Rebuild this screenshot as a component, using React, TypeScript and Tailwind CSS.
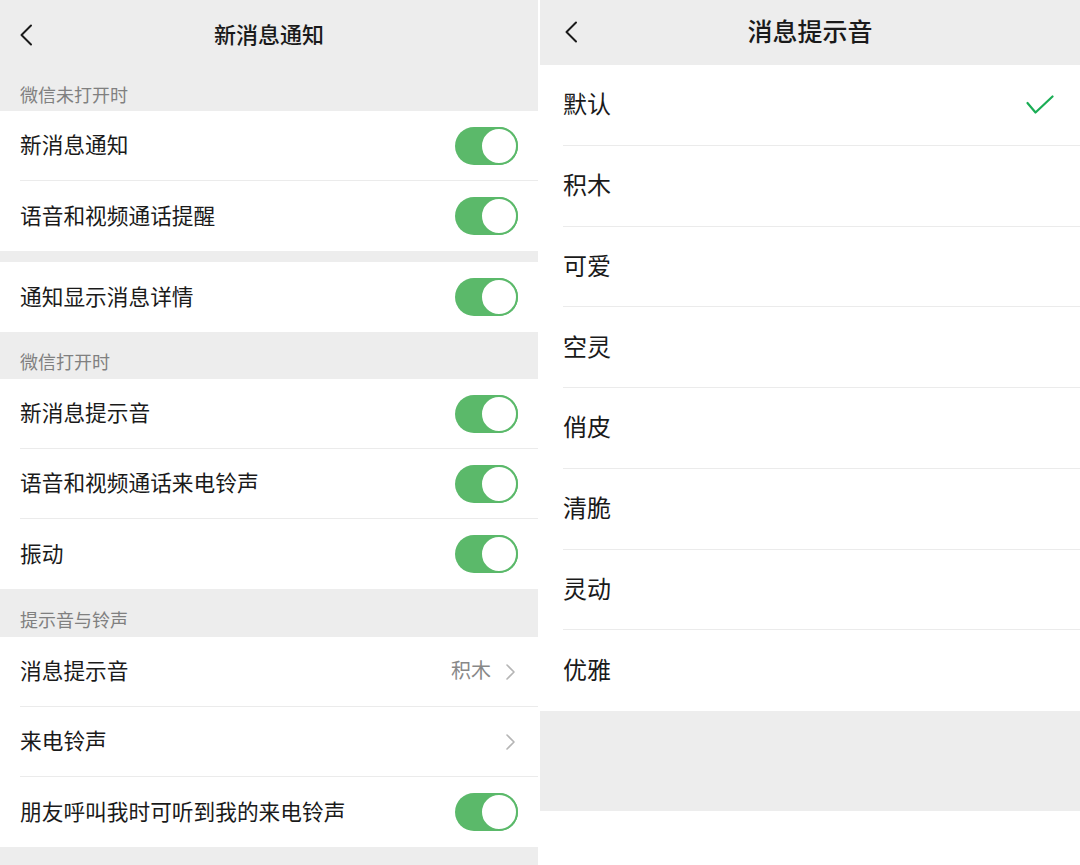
import React from "react";

const Toggle = () => (
  <div className="relative h-[38px] w-[63px] rounded-full bg-[#5bb96a]">
    <div className="absolute right-0 top-0 h-[38px] w-[38px] rounded-full border-2 border-[#5bb96a] bg-white" />
  </div>
);

const BackArrow = () => (
  <svg width="14" height="22" viewBox="0 0 14 22" fill="none">
    <path d="M12 1.5 L2.5 11 L12 20.5" stroke="#1a1a1a" strokeWidth="2" strokeLinecap="round" strokeLinejoin="round" />
  </svg>
);

const Chevron = () => (
  <svg width="9" height="16" viewBox="0 0 9 16" fill="none">
    <path d="M1 1 L8 8 L1 15" stroke="#b5b5b5" strokeWidth="1.6" strokeLinecap="round" strokeLinejoin="round" />
  </svg>
);

const Check = () => (
  <svg width="28" height="20" viewBox="0 0 28 20" fill="none">
    <path d="M1.5 8 L9.5 17.5 L26.5 1.5" stroke="#1aad55" strokeWidth="2.2" strokeLinecap="round" strokeLinejoin="round" />
  </svg>
);

type Row = { label: string; kind: "toggle" | "link"; value?: string };

const SettingRow = ({ row, last }: { row: Row; last: boolean }) => (
  <div className="flex h-[70px] items-stretch bg-white pl-5">
    <div
      className={`flex flex-1 items-center justify-between pr-5 ${
        last ? "" : "border-b border-[#ebebeb]"
      }`}
    >
      <span className="mb-[3px] text-[21.7px] leading-none text-[#1a1a1a]">{row.label}</span>
      {row.kind === "toggle" ? (
        <Toggle />
      ) : (
        <div className="flex items-center gap-[15px] pr-[3px]">
          {row.value && (
            <span className="mb-[3px] text-[20px] leading-none text-[#888888]">{row.value}</span>
          )}
          <Chevron />
        </div>
      )}
    </div>
  </div>
);

const Group = ({ rows }: { rows: Row[] }) => (
  <div className="flex flex-col">
    {rows.map((r, i) => (
      <SettingRow key={r.label} row={r} last={i === rows.length - 1} />
    ))}
  </div>
);

const SectionLabel = ({ text, h, pb }: { text: string; h: string; pb: string }) => (
  <div className={`flex items-end px-5 ${h} ${pb}`}>
    <span className="text-[18px] leading-[18px] text-[#808080]">{text}</span>
  </div>
);

const sounds = ["默认", "积木", "可爱", "空灵", "俏皮", "清脆", "灵动", "优雅"];

export default function App() {
  return (
    <div className="flex h-[865px] w-[1080px] overflow-hidden bg-white font-['Noto_Sans_CJK_SC',sans-serif]">
      {/* Left: new message notification */}
      <div className="flex w-[538px] flex-col bg-[#ededed]">
        <div className="relative flex h-[70px] items-center justify-center">
          <div className="absolute left-[19px] top-[24px]">
            <BackArrow />
          </div>
          <span className="mb-[4px] text-[22px] font-medium leading-none text-[#1a1a1a]">新消息通知</span>
        </div>
        <SectionLabel text="微信未打开时" h="h-[41px]" pb="pb-[8px]" />
        <Group
          rows={[
            { label: "新消息通知", kind: "toggle" },
            { label: "语音和视频通话提醒", kind: "toggle" },
          ]}
        />
        <div className="h-[11px]" />
        <Group rows={[{ label: "通知显示消息详情", kind: "toggle" }]} />
        <SectionLabel text="微信打开时" h="h-[47px]" pb="pb-[9px]" />
        <Group
          rows={[
            { label: "新消息提示音", kind: "toggle" },
            { label: "语音和视频通话来电铃声", kind: "toggle" },
            { label: "振动", kind: "toggle" },
          ]}
        />
        <SectionLabel text="提示音与铃声" h="h-[48px]" pb="pb-[9px]" />
        <Group
          rows={[
            { label: "消息提示音", kind: "link", value: "积木" },
            { label: "来电铃声", kind: "link" },
            { label: "朋友呼叫我时可听到我的来电铃声", kind: "toggle" },
          ]}
        />
      </div>

      <div className="w-[2px] bg-white" />

      {/* Right: message tone */}
      <div className="flex w-[540px] flex-col bg-white">
        <div className="relative flex h-[65px] items-center justify-center bg-[#ededed]">
          <div className="absolute left-[24px] top-[21px]">
            <BackArrow />
          </div>
          <span className="mb-[4px] text-[25px] font-medium leading-none text-[#1a1a1a]">消息提示音</span>
        </div>
        <div className="flex flex-col">
          {sounds.map((s, i) => (
            <div key={s} className="flex h-[80.75px] items-stretch pl-[23px]">
              <div
                className={`flex flex-1 items-center justify-between pr-[26px] ${
                  i === sounds.length - 1 ? "" : "border-b border-[#ebebeb]"
                }`}
              >
                <span className="mb-[3px] text-[24px] leading-none text-[#1a1a1a]">{s}</span>
                {i === 0 && <Check />}
              </div>
            </div>
          ))}
        </div>
        <div className="h-[100px] bg-[#ededed]" />
        <div className="flex-1 bg-white" />
      </div>
    </div>
  );
}
